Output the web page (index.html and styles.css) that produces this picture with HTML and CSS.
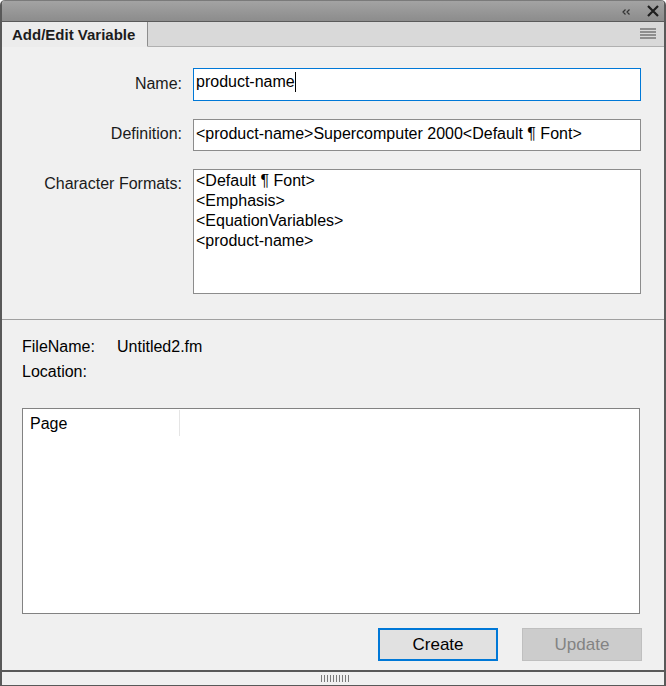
FILE: index.html
```html
<!DOCTYPE html>
<html lang="en">
    <head>
        <meta charset="UTF-8" />
        <meta name="viewport" content="width=device-width, initial-scale=1.0" />
        <title>Add/Edit Variable</title>
        <link rel="stylesheet" href="styles.css">
    </head>
    <body>
        <div class="panel">
            <div class="titlebar">
                <svg class="collapse" width="10" height="8" viewBox="0 0 10 8">
                    <path d="M4.5 1.5 L2 4 L4.5 6.5 M8.5 1.5 L6 4 L8.5 6.5" fill="none" stroke="#333" stroke-width="1.2" />
                </svg>
                <svg class="close" width="12" height="12" viewBox="0 0 12 12">
                    <path d="M1 1 L11 11 M11 1 L1 11" fill="none" stroke="#1e1e1e" stroke-width="2.2" />
                </svg>
            </div>
            <div class="tabbar">
                <div class="tab">Add/Edit Variable</div>
                <svg class="menu" width="16" height="11" viewBox="0 0 16 11">
                    <path d="M0 1 H16 M0 4 H16 M0 7 H16 M0 10 H16" stroke="#444" stroke-width="1.2" />
                </svg>
            </div>
            <div class="content">
                <div class="form">
                    <label class="label">Name:</label>
                    <div class="field name-field">product-name<span class="caret"></span></div>

                    <label class="label">Definition:</label>
                    <div class="field">&lt;product-name&gt;Supercomputer 2000&lt;Default ¶ Font&gt;</div>

                    <label class="label label-top">Character Formats:</label>
                    <div class="field list">
                        <div>&lt;Default ¶ Font&gt;</div>
                        <div>&lt;Emphasis&gt;</div>
                        <div>&lt;EquationVariables&gt;</div>
                        <div>&lt;product-name&gt;</div>
                    </div>
                </div>

                <div class="details">
                    <div class="info">
                        <span class="info-key">FileName:</span>
                        <span>Untitled2.fm</span>
                    </div>
                    <div class="info">
                        <span class="info-key">Location:</span>
                        <span></span>
                    </div>

                    <div class="table">
                        <div class="table-head">
                            <div class="col col-page">Page</div>
                            <div class="col"></div>
                        </div>
                    </div>

                    <div class="buttons">
                        <button class="btn btn-default">Create</button>
                        <button class="btn" disabled>Update</button>
                    </div>
                </div>
            </div>
            <div class="footer">
                <div class="grip"></div>
            </div>
        </div>
    </body>
</html>
```

FILE: styles.css
```css
body {
    margin: 0;
    background: #ffffff;
    font-family: "Liberation Sans", Arial, sans-serif;
    font-size: 16px;
    color: #000;
}

.panel {
    width: 666px;
    height: 686px;
    display: flex;
    flex-direction: column;
    box-sizing: border-box;
    background: #f0f0f0;
    border-left: 2px solid #595959;
    border-right: 2px solid #595959;
    border-radius: 5px 5px 0 0;
    overflow: hidden;
}

.titlebar {
    height: 20px;
    flex: none;
    display: flex;
    align-items: center;
    justify-content: flex-end;
    gap: 16px;
    padding-right: 5px;
    background: linear-gradient(#a3a3a3, #8c8c8c);
    border-top: 1px solid #7a7a7a;
    border-bottom: 1px solid #5a5a5a;
}

.collapse {
    margin-top: 2px;
}

.tabbar {
    height: 25px;
    flex: none;
    display: flex;
    align-items: stretch;
    background: #d9d9d9;
    border-bottom: 1px solid #b0b0b0;
    box-sizing: border-box;
}

.tab {
    width: 135px;
    padding-left: 10px;
    display: flex;
    align-items: center;
    font-weight: bold;
    font-size: 15px;
    color: #1c1c1c;
    background: #ececec;
    border-right: 1px solid #8d8d8d;
    margin-bottom: -1px;
    border-bottom: 1px solid #ececec;
}

.menu {
    margin: 6px 8px 0 auto;
}

.content {
    flex: 1;
    display: flex;
    flex-direction: column;
}

.form {
    display: grid;
    grid-template-columns: 180px 448px;
    column-gap: 11px;
    row-gap: 18px;
    padding: 21px 0 25px 0;
    border-bottom: 1px solid #a0a0a0;
}

.label {
    text-align: right;
    align-self: center;
    color: #1a1a1a;
    margin-top: -2px;
}

.label-top {
    align-self: start;
    margin-top: 0;
    padding-top: 6px;
}

.field {
    background: #fff;
    border: 1px solid #8c8c8c;
    height: 32px;
    box-sizing: border-box;
    padding: 0 2px;
    line-height: 27px;
    white-space: nowrap;
}

.name-field {
    height: 33px;
    border-color: #0078d7;
    line-height: 25px;
}

.caret {
    display: inline-block;
    width: 1px;
    height: 20px;
    background: #000;
    vertical-align: -5px;
}

.list {
    height: 125px;
    line-height: 20px;
    padding: 1px 2px;
}

.details {
    flex: 1;
    display: flex;
    flex-direction: column;
    padding: 14px 22px 0 20px;
}

.info {
    display: flex;
    height: 25px;
    line-height: 25px;
}

.info-key {
    width: 95px;
}

.table {
    margin-top: 24px;
    height: 206px;
    width: 618px;
    box-sizing: border-box;
    background: #fff;
    border: 1px solid #828282;
}

.table-head {
    display: flex;
    height: 27px;
}

.col {
    line-height: 27px;
    padding-left: 7px;
    margin-top: 1px;
}

.col-page {
    width: 149px;
    border-right: 1px solid #e5e5e5;
}

.buttons {
    display: flex;
    justify-content: flex-end;
    gap: 24px;
    margin-top: 14px;
}

.btn {
    width: 120px;
    height: 33px;
    font-family: inherit;
    font-size: 17px;
    color: #000;
    background: #e1e1e1;
    border: 1px solid #adadad;
    box-sizing: border-box;
}

.btn-default {
    border: 2px solid #0078d7;
}

.btn:disabled {
    background: #cccccc;
    border-color: #bfbfbf;
    color: #838383;
}

.footer {
    height: 13px;
    flex: none;
    border-top: 2px solid #595959;
    border-bottom: 1px solid #595959;
    display: flex;
    justify-content: center;
    align-items: center;
}

.grip {
    width: 28px;
    height: 7px;
    margin-left: 4px;
    background: repeating-linear-gradient(90deg, #7a7a7a 0 1px, transparent 1px 3px);
}
```
